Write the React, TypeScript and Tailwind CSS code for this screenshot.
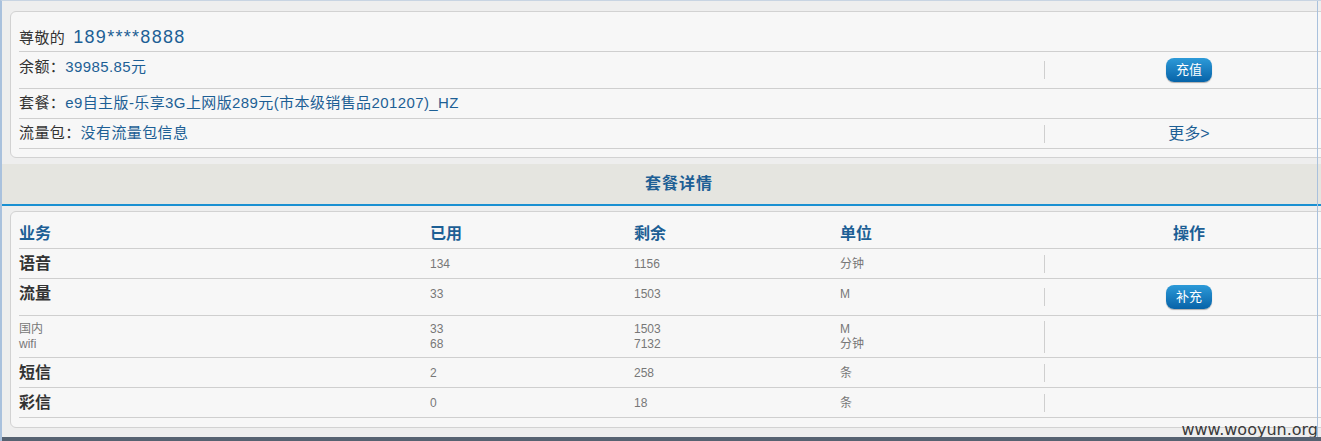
const font = { fontFamily: '"SimSun", "Liberation Sans", "Noto Sans CJK SC", sans-serif' };

function BlueButton({ children }: { children: React.ReactNode }) {
  return (
    <span className="inline-flex h-[24px] w-[46px] items-center justify-center rounded-[8px] bg-gradient-to-b from-[#2c9ad8] to-[#0663a8] text-[13px] text-white shadow-[0_1px_1px_rgba(0,0,0,0.3)]">
      {children}
    </span>
  );
}

function InfoRow({
  label,
  value,
  big,
  action,
  sep,
  h,
  lift,
}: {
  label: string;
  value: string;
  big?: boolean;
  action?: React.ReactNode;
  sep?: boolean;
  h: string;
  lift?: boolean;
}) {
  return (
    <div className={`flex items-center border-b border-[#cfcfcf] ${h}`}>
      <div className={`w-[1025px] text-[15px] tracking-[0.4px] text-[#333] ${lift ? "mb-[6px]" : ""}`}>
        {label}
        <span className={big ? "ml-[8px] text-[18px] tracking-[1.3px] text-[#1d5f95]" : "text-[#1d5f95]"}>{value}</span>
      </div>
      <div className="flex w-[289px] items-center">
        <div className={`h-[18px] w-px ${sep ? "bg-[#cfcfcf]" : ""}`} />
        <div className="flex flex-1 justify-center text-[16px] text-[#1d5f95]">{action}</div>
      </div>
    </div>
  );
}

type Row = { name: string; used: string; left: string; unit: string; btn?: string };

const rows: Row[] = [
  { name: "语音", used: "134", left: "1156", unit: "分钟" },
  { name: "流量", used: "33", left: "1503", unit: "M", btn: "补充" },
];

const rows2: Row[] = [
  { name: "短信", used: "2", left: "258", unit: "条" },
  { name: "彩信", used: "0", left: "18", unit: "条" },
];

function DataRow({ r, h }: { r: Row; h: string }) {
  const lift = r.btn ? "mb-[6px]" : "";
  return (
    <div className={`grid grid-cols-[411px_204px_206px_204px_289px] items-center border-b border-[#cfcfcf] ${h}`}>
      <div className={`text-[16px] font-bold text-[#333] ${lift}`}>{r.name}</div>
      <div className={`text-[12px] text-[#777] ${lift}`}>{r.used}</div>
      <div className={`text-[12px] text-[#777] ${lift}`}>{r.left}</div>
      <div className={`text-[12px] text-[#777] ${lift}`}>{r.unit}</div>
      <div className="flex items-center">
        <div className="h-[18px] w-px bg-[#cfcfcf]" />
        <div className="flex flex-1 justify-center">{r.btn && <BlueButton>{r.btn}</BlueButton>}</div>
      </div>
    </div>
  );
}

export default function App() {
  return (
    <div className="relative h-[441px] w-[1321px] overflow-hidden border-l-2 border-t border-l-[#a9c1dd] border-t-[#c8d4e2] bg-[#eeeeee]" style={font}>
      <div className="w-[1354px]">
        {/* top card */}
        <div className="ml-[8px] mt-[10px] w-[1340px] rounded-[6px] border border-[#d2d2d2] bg-[#f7f7f7] pb-[8px] pl-[8px] pt-[12px]">
          <InfoRow label="尊敬的" value="189****8888" big h="h-[28px]" />
          <InfoRow label="余额：" value="39985.85元" sep lift action={<BlueButton>充值</BlueButton>} h="h-[37px]" />
          <InfoRow label="套餐：" value="e9自主版-乐享3G上网版289元(市本级销售品201207)_HZ" h="h-[30px]" />
          <InfoRow label="流量包：" value="没有流量包信息" sep action={<span>更多&gt;</span>} h="h-[30px]" />
        </div>

        {/* section header */}
        <div className="mt-[6px] flex h-[42px] items-center justify-center border-b-2 border-[#1a90d2] bg-[#e5e5e0] text-[16px] font-bold tracking-[1px] text-[#1d5f95]">
          套餐详情
        </div>

        {/* detail card */}
        <div className="ml-[8px] mt-[5px] w-[1340px] rounded-[6px] border border-[#d2d2d2] bg-[#f7f7f7] pb-[9px] pl-[8px] pt-[8px]">
          <div className="grid h-[29px] grid-cols-[411px_204px_206px_204px_289px] items-center border-b border-[#cfcfcf] text-[16px] font-bold text-[#1d5f95]">
            <div>业务</div>
            <div>已用</div>
            <div>剩余</div>
            <div>单位</div>
            <div className="pl-px text-center">操作</div>
          </div>
          <DataRow r={rows[0]} h="h-[30px]" />
          <DataRow r={rows[1]} h="h-[37px]" />
          <div className="grid h-[42px] grid-cols-[411px_204px_206px_204px_289px] items-center border-b border-[#cfcfcf] text-[12px] leading-[15px] text-[#777]">
            <div>
              <div>国内</div>
              <div>wifi</div>
            </div>
            <div>
              <div>33</div>
              <div>68</div>
            </div>
            <div>
              <div>1503</div>
              <div>7132</div>
            </div>
            <div>
              <div>M</div>
              <div>分钟</div>
            </div>
            <div className="flex items-center">
              <div className="h-[32px] w-px bg-[#cfcfcf]" />
            </div>
          </div>
          {rows2.map((r) => (
            <DataRow key={r.name} r={r} h="h-[30px]" />
          ))}
        </div>
      </div>

      <div className="absolute right-[3px] bottom-[3px] text-[16px] leading-none text-[#3a3a3a]" style={{ fontFamily: '"DejaVu Sans", sans-serif' }}>
        www.wooyun.org
      </div>
      <div className="pointer-events-none absolute right-[3px] top-0 h-full w-px bg-[#a9c1dd]" />
      <div className="absolute bottom-0 left-0 h-[4px] w-full bg-[#566271]" />
    </div>
  );
}
